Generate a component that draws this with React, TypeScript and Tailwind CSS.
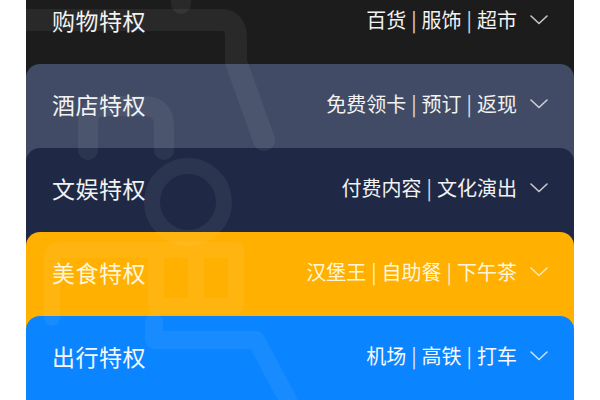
import React from "react";

const cards = [
  { title: "购物特权", sub: ["百货", "服饰", "超市"], bg: "bg-[#1c1c1d]", text: "text-[#f2f2f2]" },
  { title: "酒店特权", sub: ["免费领卡", "预订", "返现"], bg: "bg-[#414b65]", text: "text-[#f2f2f2]" },
  { title: "文娱特权", sub: ["付费内容", "文化演出"], bg: "bg-[#1f2945]", text: "text-[#f2f2f2]" },
  { title: "美食特权", sub: ["汉堡王", "自助餐", "下午茶"], bg: "bg-[#ffb000]", text: "text-[#fff6dc]" },
  { title: "出行特权", sub: ["机场", "高铁", "打车"], bg: "bg-[#0a84ff]", text: "text-[#f5f9ff]" },
];

function Chevron() {
  return (
    <svg width="18" height="10" viewBox="0 0 18 10" fill="none" className="opacity-80">
      <polyline points="1,1 9,8.5 17,1" stroke="currentColor" strokeWidth="1.6" strokeLinecap="round" strokeLinejoin="round" />
    </svg>
  );
}

export default function App() {
  return (
    <div
      className="relative w-[600px] h-[400px] overflow-hidden bg-white"
      style={{ fontFamily: '"Noto Sans CJK SC", "Noto Sans", sans-serif' }}
    >
      <div className="relative mx-[26px] flex flex-col -mt-[20px]">
        {cards.map((c, i) => (
          <div
            key={c.title}
            className={`${c.bg} ${c.text} h-[100px] rounded-t-[14px] ${i === 0 ? "" : "-mt-[16px]"}`}
          >
            <div className="h-[80px] flex items-center justify-between pl-[26px] pr-[26px]">
              <span className="text-[23px] leading-none tracking-[0.5px]">{c.title}</span>
              <div className="flex items-center gap-[13px]">
                <span className="text-[20px] leading-none flex items-center">
                  {c.sub.map((s, j) => (
                    <React.Fragment key={s}>
                      {j > 0 && <span className="mx-[5px] opacity-90">|</span>}
                      <span>{s}</span>
                    </React.Fragment>
                  ))}
                </span>
                <Chevron />
              </div>
            </div>
          </div>
        ))}
        <svg
          className="absolute left-0 top-[20px] pointer-events-none"
          width="548"
          height="400"
          viewBox="0 0 548 400"
          fill="none"
        >
          <g stroke="white" strokeOpacity="0.06" strokeLinecap="round" strokeLinejoin="round">
            <path d="M -5 20 H 195 Q 210 20 210 38 V 62 L 238 140" strokeWidth="22" />
            <path d="M 155 -10 V 4" strokeWidth="20" />
            <path d="M 62 150 V 122 Q 62 106 80 106 H 118 Q 138 106 138 126 V 150" strokeWidth="20" />
            <circle cx="162" cy="202" r="36" strokeWidth="16" />
            <path d="M 26 318 V 258 Q 26 250 34 250 H 210 V 306 H 130 M 130 250 V 306 M 170 250 V 306" strokeWidth="16" />
            <path d="M 128 322 V 340 H 230 L 262 400" strokeWidth="18" />
          </g>
        </svg>
      </div>
    </div>
  );
}
